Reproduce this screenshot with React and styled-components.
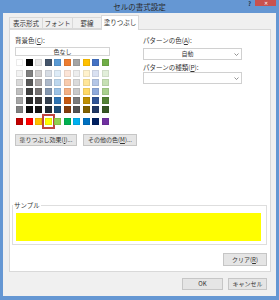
import React from "react";
import styled, { createGlobalStyle } from "styled-components";

const GlobalStyle = createGlobalStyle`
  html, body {
    margin: 0;
    padding: 0;
    background: #fff;
  }
  body {
    font-family: "Noto Sans CJK JP", "Noto Sans", sans-serif;
    color: #333;
  }
`;

const Window = styled.div`
  width: 279px;
  height: 300px;
  box-sizing: border-box;
  background: #6597d3;
  padding: 0 3px 4px 3px;
  display: flex;
  flex-direction: column;
`;

const TitleBar = styled.div`
  height: 13px;
  display: grid;
  grid-template-columns: 1fr auto 1fr;
  align-items: center;
`;

const Title = styled.div`
  grid-column: 2;
  font-size: 7.5px;
  line-height: 13px;
  color: #2a2a2a;
`;

const Controls = styled.div`
  grid-column: 3;
  justify-self: end;
  align-self: start;
  display: flex;
  align-items: flex-start;
  gap: 4px;
  margin-right: 0;
`;

const Help = styled.span`
  font-size: 6px;
  line-height: 8px;
  color: #1f3550;
  font-weight: 700;
`;

const Close = styled.div`
  width: 21px;
  height: 6px;
  background: #c9524f;
  color: #fff;
  font-size: 5px;
  line-height: 6px;
  text-align: center;
`;

const Body = styled.div`
  flex: 1;
  background: #f0f0f0;
  display: flex;
  flex-direction: column;
  padding: 1px 5px 0 6px;
`;

const Tabs = styled.div`
  display: flex;
  align-items: flex-end;
  height: 15px;
  position: relative;
  z-index: 1;
`;

const Tab = styled.div`
  box-sizing: border-box;
  width: ${(p) => p.$w}px;
  height: ${(p) => (p.$active ? 15 : 12)}px;
  margin-bottom: ${(p) => (p.$active ? -1 : 0)}px;
  margin-right: -1px;
  border: 1px solid #d9d9d9;
  border-bottom: ${(p) => (p.$active ? "none" : "1px solid #d9d9d9")};
  background: ${(p) => (p.$active ? "#fff" : "#f0f0f0")};
  font-size: 6.5px;
  line-height: ${(p) => (p.$active ? 12 : 10)}px;
  text-align: center;
  color: #333;
`;

const Panel = styled.div`
  box-sizing: border-box;
  height: 243px;
  background: #fff;
  border: 1px solid #d9d9d9;
  display: flex;
  flex-direction: column;
  padding-bottom: 5px;
`;

const TopArea = styled.div`
  display: flex;
  padding: 6px 0 0 5px;
`;

const LeftCol = styled.div`
  width: 128px;
  display: flex;
  flex-direction: column;
`;

const RightCol = styled.div`
  width: 99px;
  display: flex;
  flex-direction: column;
`;

const Label = styled.div`
  font-size: 6.5px;
  line-height: 8px;
  height: 8px;
  margin-top: ${(p) => p.$mt || 0}px;
  white-space: nowrap;
  color: #333;
`;

const NoColor = styled.div`
  box-sizing: border-box;
  width: 95px;
  height: 9px;
  margin-top: 3px;
  border: 1px solid #d4d4d4;
  background: #fff;
  font-size: 6px;
  line-height: 7px;
  text-align: center;
`;

const SwatchGrid = styled.div`
  display: grid;
  grid-template-columns: repeat(10, 7px);
  grid-auto-rows: 7px;
  column-gap: 2.5px;
  row-gap: 2px;
  margin-left: 1px;
  margin-top: ${(p) => p.$mt}px;
`;

const Swatch = styled.div`
  box-sizing: border-box;
  position: relative;
  background: ${(p) => p.$c};
  border: 1px solid rgba(0, 0, 0, 0.08);
`;

const Selected = styled.div`
  position: absolute;
  inset: -5px -4px -5px -4px;
  border: 2px solid #c0453f;
`;

const ButtonRow = styled.div`
  display: flex;
  gap: 6px;
  margin-top: 9px;
`;

const Button = styled.div`
  box-sizing: border-box;
  width: ${(p) => p.$w}px;
  height: ${(p) => p.$h || 12}px;
  background: #e5e5e5;
  border: 1px solid #c6c6c6;
  font-size: 6px;
  line-height: ${(p) => (p.$h || 12) - 2}px;
  text-align: center;
  white-space: nowrap;
  color: #333;
`;

const Select = styled.div`
  box-sizing: border-box;
  height: 12px;
  margin-top: ${(p) => p.$mt}px;
  border: 1px solid #d0d0d0;
  background: #fff;
  display: flex;
  align-items: center;
`;

const SelectText = styled.div`
  flex: 1;
  font-size: 6px;
  line-height: 10px;
  text-align: center;
`;

const Arrow = styled.div`
  width: 10px;
  display: flex;
  justify-content: center;
  align-items: center;
`;

const SampleGroup = styled.fieldset`
  margin: auto 3px 0 2px;
  padding: 4px 5px 3px 3px;
  border: 1px solid #dedede;
  min-width: 0;
`;

const Legend = styled.legend`
  font-size: 6.5px;
  line-height: 8px;
  padding: 0 1px;
  margin-left: -3px;
  color: #333;
`;

const SampleFill = styled.div`
  height: 28px;
  background: #ffff00;
`;

const ClearRow = styled.div`
  display: flex;
  justify-content: flex-end;
  margin: 8px 3px 0 0;
`;

const Footer = styled.div`
  display: flex;
  justify-content: flex-end;
  gap: 5px;
  margin-top: 6px;
  padding-right: 4px;
`;

const main = ["#FFFFFF", "#000000", "#E7E6E6", "#44546A", "#5B9BD5", "#ED7D31", "#A5A5A5", "#FFC000", "#4472C4", "#70AD47"];
const tints = [
  ["#F2F2F2", "#7F7F7F", "#D0CECE", "#D6DCE4", "#DDEBF7", "#FCE4D6", "#EDEDED", "#FFF2CC", "#D9E1F2", "#E2EFDA"],
  ["#D9D9D9", "#595959", "#AEAAAA", "#ADB9CA", "#BDD7EE", "#F8CBAD", "#DBDBDB", "#FFE699", "#B4C6E7", "#C6E0B4"],
  ["#BFBFBF", "#404040", "#757171", "#8497B0", "#9BC2E6", "#F4B084", "#C9C9C9", "#FFD966", "#8EA9DB", "#A9D08E"],
  ["#A6A6A6", "#262626", "#3A3838", "#333F4F", "#2F75B5", "#C65911", "#7B7B7B", "#BF8F00", "#305496", "#548235"],
  ["#808080", "#0D0D0D", "#171616", "#222B35", "#1F4E78", "#833C0C", "#525252", "#806000", "#203764", "#375623"],
];
const standard = ["#C00000", "#FF0000", "#FFC000", "#FFFF00", "#92D050", "#00B050", "#00B0F0", "#0070C0", "#002060", "#7030A0"];

const tabs = [
  { label: "表示形式", w: 34 },
  { label: "フォント", w: 31 },
  { label: "罫線", w: 30 },
  { label: "塗りつぶし", w: 38, active: true },
];

const Chevron = () => (
  <svg width="5" height="3" viewBox="0 0 5 3">
    <polyline points="0.5,0.5 2.5,2.5 4.5,0.5" fill="none" stroke="#777" strokeWidth="0.8" />
  </svg>
);

const App = () => {
  return (
    <>
      <GlobalStyle />
      <Window>
        <TitleBar>
          <Title>セルの書式設定</Title>
          <Controls>
            <Help>?</Help>
            <Close>✕</Close>
          </Controls>
        </TitleBar>
        <Body>
          <Tabs>
            {tabs.map((t) => (
              <Tab key={t.label} $w={t.w} $active={t.active}>
                {t.label}
              </Tab>
            ))}
          </Tabs>
          <Panel>
            <TopArea>
              <LeftCol>
                <Label>
                  背景色(<u>C</u>):
                </Label>
                <NoColor>色なし</NoColor>
                <SwatchGrid $mt={3}>
                  {main.map((c, i) => (
                    <Swatch key={i} $c={c} />
                  ))}
                </SwatchGrid>
                <SwatchGrid $mt={4}>
                  {tints.flat().map((c, i) => (
                    <Swatch key={i} $c={c} />
                  ))}
                </SwatchGrid>
                <SwatchGrid $mt={5}>
                  {standard.map((c, i) => (
                    <Swatch key={i} $c={c}>
                      {i === 3 && <Selected />}
                    </Swatch>
                  ))}
                </SwatchGrid>
                <ButtonRow>
                  <Button $w={62}>
                    塗りつぶし効果(<u>I</u>)...
                  </Button>
                  <Button $w={54}>
                    その他の色(<u>M</u>)...
                  </Button>
                </ButtonRow>
              </LeftCol>
              <RightCol>
                <Label>
                  パターンの色(<u>A</u>):
                </Label>
                <Select $mt={4}>
                  <SelectText>自動</SelectText>
                  <Arrow>
                    <Chevron />
                  </Arrow>
                </Select>
                <Label $mt={3}>
                  パターンの種類(<u>P</u>):
                </Label>
                <Select $mt={1}>
                  <SelectText />
                  <Arrow>
                    <Chevron />
                  </Arrow>
                </Select>
              </RightCol>
            </TopArea>
            <SampleGroup>
              <Legend>サンプル</Legend>
              <SampleFill />
            </SampleGroup>
            <ClearRow>
              <Button $w={44} $h={13}>
                クリア(<u>R</u>)
              </Button>
            </ClearRow>
          </Panel>
          <Footer>
            <Button $w={41}>OK</Button>
            <Button $w={39}>キャンセル</Button>
          </Footer>
        </Body>
      </Window>
    </>
  );
};

export default App;
